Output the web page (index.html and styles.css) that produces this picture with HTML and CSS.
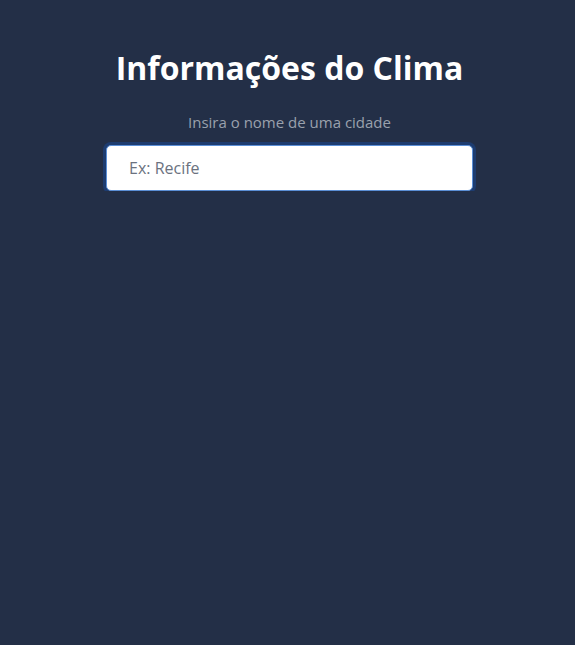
FILE: index.html
```html
<!DOCTYPE html>
<html lang="pt-BR">

<head>
  <meta charset="utf-8">
  <title>Informações do Clima</title>
  <link rel="stylesheet" href="styles.css">
</head>

<body>
  <div class="container">
    <h1>Informações do Clima</h1>
    <label for="city-input" class="label">Insira o nome de uma cidade</label>
    <input type="text" id="city-input" class="city-input" placeholder="Ex: Recife" autofocus>
  </div>
</body>

</html>
```

FILE: styles.css
```css
* {
  box-sizing: border-box;
}

body {
  font-family: "Open Sans", Arial, sans-serif;
  background-color: #232f47;
  margin: 0;
  padding-left: 4px;
}

.container {
  width: 367px;
  margin: 0 auto;
  padding-top: 44px;
  display: flex;
  flex-direction: column;
  align-items: center;
}

h1 {
  color: #fff;
  font-size: 32px;
  font-weight: 700;
  margin: 0 0 20px;
  line-height: 48px;
  white-space: nowrap;
}

.label {
  color: #9aa1ad;
  font-size: 15px;
  line-height: 20px;
  margin-bottom: 13px;
}

/* campo ja aparece selecionado */
.city-input {
  width: 100%;
  height: 46px;
  border: 1px solid #5b8fd6;
  border-radius: 5px;
  padding: 0 22px;
  font-family: inherit;
  font-size: 16px;
  color: #333;
  background: #fff;
  outline: none;
  box-shadow: 0 0 0 3px #1d3c70;
}

.city-input::placeholder {
  color: #6b7280;
}
```
